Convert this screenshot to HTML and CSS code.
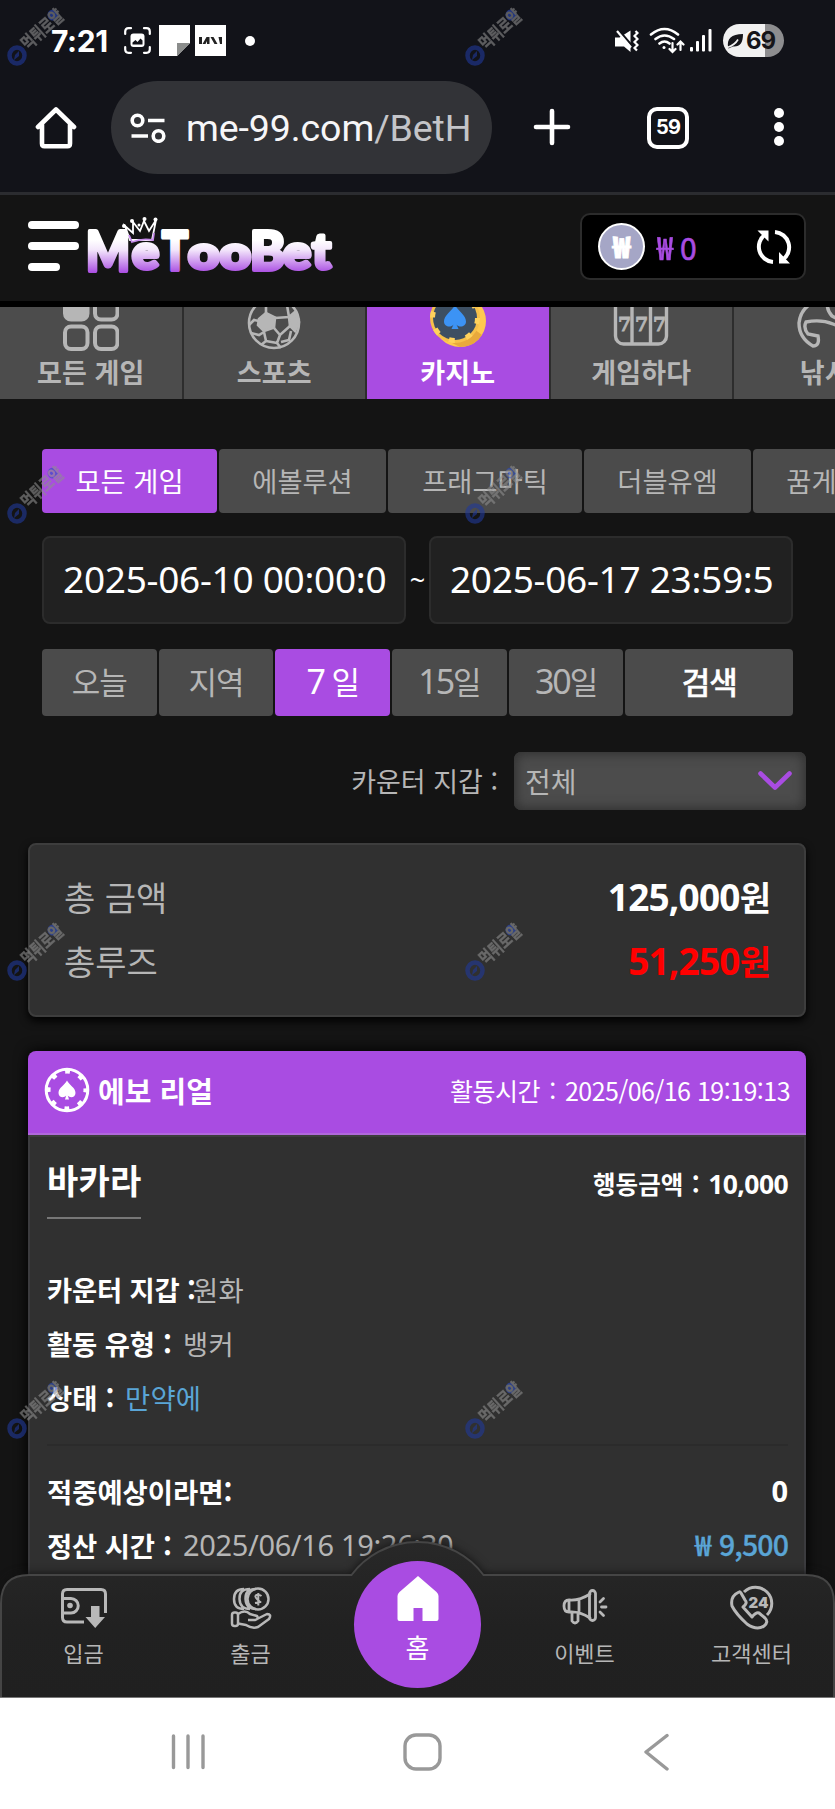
FILE: index.html
```html
<!DOCTYPE html>
<html lang="ko">
<head>
<meta charset="utf-8">
<title>MeTooBet</title>
<link rel="stylesheet" href="styles.css">
</head>
<body>
<svg class="defs" width="0" height="0" aria-hidden="true">
  <defs>
    <symbol id="mark" viewBox="0 0 66 70">
      <ellipse cx="17" cy="55.500" rx="7.500" ry="8" fill="none" stroke="#20399a" stroke-width="4.500"/>
      <path d="M14 60l1-5 4-4v5z" fill="#20399a"/>
      <circle cx="53" cy="15" r="5.500" fill="#2a4bc4"/>
      <text transform="translate(28 51) rotate(-42)" class="mark-text" textLength="50" lengthAdjust="spacingAndGlyphs">먹튀로얄</text>
    </symbol>
  </defs>
</svg>
<div class="phone">
  <header class="status">
    <div class="status-left">
      <span class="clock">7:21</span>
      <svg class="i-shot" width="27" height="27" viewBox="0 0 27 27" fill="none" stroke="#fff" stroke-width="2.2" stroke-linecap="round"><path d="M1.2 7V4.500Q1.200 1.200 4.500 1.200H7M20 1.200H22.500Q25.800 1.200 25.800 4.500V7M25.800 20V22.500Q25.800 25.800 22.500 25.800H20M7 25.800H4.500Q1.200 25.800 1.200 22.500V20"/><rect x="6.500" y="6.500" width="14" height="13.500" rx="3" fill="#fff" stroke="none"/><path d="M8.500 17.500v-2l3-2.500 2 2 3-3.500 2 2v4z" fill="#121319" stroke="none"/></svg>
      <svg class="i-note" width="31" height="31" viewBox="0 0 31 31"><path d="M0 0H31V18L18 31H0z" fill="#fff"/><path d="M18 31V18H31z" fill="#8b8d8c"/></svg>
      <svg class="i-w" width="31" height="31" viewBox="0 0 31 31"><path d="M0 0H31V31H0z" fill="#fff"/><path d="M4 12h3v7H4zM7.500 19l4-7h3v7h-2.500v-3l-1.500 3zM15.500 12h3l4 7h-3zM23.500 12H27v7h-2z" fill="#222"/></svg>
      <i class="dot"></i>
    </div>
    <div class="status-right">
      <svg width="24" height="24" viewBox="0 0 24 24" fill="#fff"><path d="M0 8.500h4.500L15.500 1.500V23L9 17.500H0z"/><path d="M3.500 1L18 18" stroke="#121319" stroke-width="2.500"/><path d="M2 2L16 18.500" stroke="#fff" stroke-width="2.200"/><path d="M20.500 2l2 2-3 3 3 3-3 3 3 3-3 3 2.500 2.500" fill="none" stroke="#fff" stroke-width="2.200"/></svg>
      <svg class="i-wifi" width="36" height="28" viewBox="0 0 36 28" fill="none" stroke="#fff" stroke-width="2.600" stroke-linecap="round"><path d="M2 7.500Q15.500-3.500 29 7.500M6.500 12Q15.500 5 25 12M10.500 16.500Q15.500 12.500 20.500 16.500"/><circle cx="15" cy="20.500" r="1.500" fill="#fff" stroke="none"/><path d="M23.500 16v8.500M20.500 22l3 3 3-3M31.500 23v-8M28.500 17.500l3-3 3 3" stroke-width="2.200"/></svg>
      <svg class="i-sig" width="22" height="23" viewBox="0 0 22 23" fill="#fff"><rect y="18" width="3" height="4.500" rx="1"/><rect x="6" y="12" width="3" height="10.500" rx="1"/><rect x="12" y="6" width="3" height="16.500" rx="1"/><rect x="18.500" y="0" width="3" height="22.500" rx="1"/></svg>
      <span class="battery"><svg width="17" height="16" viewBox="0 0 17 16"><path d="M1 14C0 6 4 1 16 1c0 9-3 13-10 12.500L1.500 15.500z" fill="#151519"/><path d="M0 14.500Q8 12 11 6.500" fill="none" stroke="#f1f1f1" stroke-width="1.600"/></svg>69</span>
    </div>
  </header>

  <div class="browser">
    <svg class="i-home" width="42" height="43" viewBox="0 0 42 43" fill="none" stroke="#fff" stroke-width="4.600" stroke-linejoin="round" stroke-linecap="round"><path d="M3 21L21 3.500 39 21M7 18.500V37.500Q7 40.200 9.500 40.200H32.500Q35 40.200 35 37.500V18.500"/></svg>
    <div class="pill">
      <svg width="36" height="30" viewBox="0 0 36 30" fill="none" stroke="#fff" stroke-width="3.600"><circle cx="7.500" cy="7.500" r="5.300"/><path d="M18 7.500H34.500M1.500 23H18"/><circle cx="28.500" cy="23" r="5.300"/></svg>
      <span class="url">me-99.com<em>/BetH</em></span>
    </div>
    <svg class="i-plus" width="38" height="38" viewBox="0 0 38 38" stroke="#fff" stroke-width="4.600" stroke-linecap="round"><path d="M19 3V35M3 19H35"/></svg>
    <span class="tabs-count">59</span>
    <span class="kebab"><i></i><i></i><i></i></span>
  </div>

  <main class="site">
    <div class="site-head">
      <span class="burger"><i></i><i></i><i></i></span>
      <svg class="logo" width="250" height="62" viewBox="0 0 250 62">
        <defs><linearGradient id="lg" gradientUnits="userSpaceOnUse" x1="0" y1="24" x2="0" y2="57"><stop offset="0" stop-color="#fff"/><stop offset=".3" stop-color="#f3e6fb"/><stop offset="1" stop-color="#a94ce2"/></linearGradient></defs>
        <g fill="url(#lg)" stroke="url(#lg)" stroke-width="4" class="logo-text">
          <text x="3" y="55" font-size="55" textLength="44" lengthAdjust="spacingAndGlyphs">M</text>
          <text x="49" y="53" font-size="47" textLength="27" lengthAdjust="spacingAndGlyphs">e</text>
          <text x="79" y="54" font-size="53" textLength="26" lengthAdjust="spacingAndGlyphs">T</text>
          <text x="105" y="53" font-size="46" textLength="63" lengthAdjust="spacingAndGlyphs">oo</text>
          <text x="167" y="54" font-size="53" textLength="35" lengthAdjust="spacingAndGlyphs">B</text>
          <text x="200" y="53" font-size="47" textLength="28" lengthAdjust="spacingAndGlyphs">e</text>
          <text x="229" y="53" font-size="50" textLength="19" lengthAdjust="spacingAndGlyphs">t</text>
        </g>
        <g stroke="#fff" stroke-width="1.800" fill="#141414"><path d="M42 10L47 24H69L73 4 66 15 61 5 57 15 50 6 50 17z"/><path d="M46 19L49 26Q59 22 70 24L71 17" fill="none" stroke="#c58be9"/><g fill="#fff" stroke="none"><circle cx="41" cy="10" r="2"/><circle cx="49" cy="5" r="2"/><circle cx="61.500" cy="3" r="2"/><circle cx="72.500" cy="3.500" r="2"/><circle cx="56" cy="9" r="1.500"/></g></g>
      </svg>
      <div class="wallet">
        <span class="coin">₩</span>
        <span class="money"><b>₩</b><i>0</i></span>
        <svg width="36" height="36" viewBox="0 0 36 36" fill="none" stroke="#fff" stroke-width="4"><path d="M17 33A15.300 15.300 0 0 1 9 5.500M19 3A15.300 15.300 0 0 1 27 30.500"/><path d="M1.500 1.500H12.500V12.500zM34 34.500H23V23z" fill="#fff" stroke="none"/></svg>
      </div>
    </div>

    <nav class="cats">
      <a><svg width="56" height="56" viewBox="0 0 56 56" fill="none" stroke="#b6b6b6" stroke-width="4"><rect x="2" y="2" width="22.500" height="22.500" rx="6" fill="#b6b6b6"/><rect x="32" y="2" width="22.500" height="22.500" rx="6"/><rect x="2" y="31.500" width="22.500" height="22.500" rx="6"/><rect x="32" y="31.500" width="22.500" height="22.500" rx="6"/></svg><span>모든 게임</span></a>
      <a><svg class="up" width="56" height="56" viewBox="0 0 56 56" fill="none" stroke="#b6b6b6" stroke-width="2.600"><circle cx="28" cy="28" r="25"/><path d="M13 24l7-6 9 4.500-1 10-10 3.500-6-6z" fill="#b6b6b6"/><path d="M43 22l6-5 4 10-4 9-5-5z" fill="#b6b6b6"/><path d="M29 23l14-1M28 33l6 7 10-9M18 37l2 9-5 4M34 40l-3 8 4 5M20 46l11 2M3 30l5-5 5 1M45 36l-2 9-8 2M20 18V8M43 22l-2-12M5 38l8 2 5-3"/></svg><span>스포츠</span></a>
      <a class="on"><svg width="60" height="60" viewBox="0 0 60 60"><circle cx="32" cy="30" r="26" fill="#ffc94f"/><path d="M32 56A26 26 0 0 0 54 44L46 38 24 52z" fill="#e9a93c"/><circle cx="27" cy="27" r="25" fill="#f6c04a"/><circle cx="27" cy="27" r="22" fill="#3d4f62"/><circle cx="27" cy="27" r="22.500" fill="none" stroke="#ffd25c" stroke-width="5" stroke-dasharray="6 11.670" /><path d="M27 14C24 20 16 24 16 30.500 16 36 23 37 25.500 33.500L23.500 38H30.500L28.500 33.500C31 37 38 36 38 30.500 38 24 30 20 27 14z" fill="#3c93f5"/></svg><span>카지노</span></a>
      <a><svg class="up2" width="56" height="56" viewBox="0 0 56 56" fill="none" stroke="#b6b6b6" stroke-width="3.400"><rect x="2.500" y="5" width="51" height="46" rx="8"/><path d="M19 5V51M37.500 5V51"/><g class="sevens"><text x="5" y="38">7</text><text x="22" y="38">7</text><text x="40" y="38">7</text></g></svg><span>게임하다</span></a>
      <a><svg width="56" height="56" viewBox="0 0 56 56" fill="none" stroke="#b6b6b6" stroke-width="3.400"><path d="M26 4Q4 9 2 28q0 15 14 23 7 0 5-10l-10-2Q6 33 9 27q15-3 27 2 12 5 18 1M33 2q-6 10 2 19 10 6 22 4"/></svg><span>낚시</span></a>
    </nav>

    <nav class="vendors">
      <a class="on w1">모든 게임</a><a class="w2">에볼루션</a><a class="w3">프래그마틱</a><a class="w2">더블유엠</a><a class="w2">꿈게이밍</a>
    </nav>

    <div class="range">
      <div class="field"><span>2025-06-10 00:00:0</span></div>
      <span class="tilde">~</span>
      <div class="field"><span>2025-06-17 23:59:5</span></div>
    </div>

    <div class="days">
      <a>오늘</a><a>지역</a><a class="on"><b>7</b>&nbsp;일</a><a><b>15</b>일</a><a><b>30</b>일</a><a class="search">검색</a>
    </div>

    <div class="filter">
      <span>카운터 지갑 :</span>
      <div class="select"><span>전체</span><svg width="34" height="20" viewBox="0 0 34 20" fill="none" stroke="#a94ce2" stroke-width="4.600" stroke-linecap="round" stroke-linejoin="round"><path d="M2.500 2.500L17 16.500 31.500 2.500"/></svg></div>
    </div>

    <section class="totals">
      <div class="trow"><span>총 금액</span><strong><b>125,000</b>원</strong></div>
      <div class="trow red"><span>총루즈</span><strong><b>51,250</b>원</strong></div>
    </section>

    <section class="record">
      <div class="rec-head">
        <svg width="46" height="46" viewBox="0 0 46 46"><circle cx="23" cy="23" r="20.800" fill="none" stroke="#fff" stroke-width="3"/><circle cx="23" cy="23" r="18.700" fill="none" stroke="#fff" stroke-width="4.500" stroke-dasharray="5 9.687" stroke-dashoffset="2.500"/><path d="M23 13.500C21 18 14.500 20.500 14.500 26 14.500 30.500 20 31.500 22.200 28.500L21 32.500H25L23.800 28.500C26 31.500 31.500 30.500 31.500 26 31.500 20.500 25 18 23 13.500z" fill="#fff"/></svg>
        <h2>에보 리얼</h2>
        <time>활동시간<i>:</i>2025/06/16 19:19:13</time>
      </div>
      <div class="rec-body">
        <div class="game"><h3>바카라</h3><strong>행동금액<i>:</i><b>10,000</b></strong></div>
        <p><b class="k1">카운터 지갑 :</b><span>원화</span></p>
        <p><b class="k2">활동 유형<i>:</i></b><span>뱅커</span></p>
        <p><b class="k3">상태<i>:</i></b><span class="blue">만약에</span></p>
        <hr>
        <p><b>적중예상이라면:</b><strong class="end zero">0</strong></p>
        <p><b class="k2">정산 시간<i>:</i></b><span class="num">2025/06/16 19:26:30</span><span class="end blue won"><i>₩</i>9,500</span></p>
      </div>
    </section>

    <nav class="dock">
      <svg class="dock-bg" width="835" height="157" viewBox="0 0 835 157"><defs><linearGradient id="dg" x1="0" y1="0" x2="0" y2="1"><stop offset="0" stop-color="#282828"/><stop offset=".55" stop-color="#212121"/><stop offset="1" stop-color="#202020"/></linearGradient></defs><path d="M1 158V63Q1 35 29 35H351.500A82.500 82.500 0 0 1 483.500 35H806Q834 35 834 63V158" fill="url(#dg)" stroke="#454545" stroke-width="2"/></svg>
      <div class="dock-items">
        <a><svg width="48" height="44" viewBox="0 0 48 44" fill="none" stroke="#b8b8b8" stroke-width="3"><path d="M24 36H7Q2.500 36 2.500 31.500V8Q2.500 3.500 7 3.500H41Q45.500 3.500 45.500 8V27M3 12.500H11A7 7 0 0 1 11 27H3"/><circle cx="10" cy="19.500" r="2.800" fill="#b8b8b8" stroke="none"/><path d="M31 20H39.500V31H45L35.200 42 25.500 31H31z" fill="#b8b8b8" stroke="none"/></svg><span>입금</span></a>
        <a><svg width="42" height="44" viewBox="0 0 42 44" fill="none" stroke="#b8b8b8" stroke-width="2.500" stroke-linejoin="round"><circle cx="28" cy="13" r="10.500"/><path d="M20 3Q9 3 9.500 13T20 23M14 3Q4 3 4 13T14 23M26 3Q15 3 15.500 13T26 23"/><path d="M31.500 10Q29 8 26.500 9T27 13 30.500 16 25 17M28.300 7V19.500" stroke-width="2"/><rect x="2" y="26.500" width="6" height="13.500" rx="2.500"/><path d="M8 28Q15 23 20 28L27 30Q29 33 25 34H18M27 33L37 28Q42 28 39 33L28 41Q22 43 16 39L8 37.500"/></svg><span>출금</span></a>
        <a></a>
        <a><svg class="horn" width="46" height="44" viewBox="0 0 46 44" fill="none" stroke="#b8b8b8" stroke-width="2.800" stroke-linejoin="round" stroke-linecap="round"><path d="M7 14Q17 15 28 8M7 26Q17 25 28 32M7 14Q2 14 2 20T7 26zM17 14V25.500M10 27V35Q13 39 16 35V27"/><rect x="27.500" y="4.500" width="6" height="30" rx="3"/><path d="M38 16l3.500-3.500M39.500 21H44M38 26l3.500 3.500"/></svg><span>이벤트</span></a>
        <a><svg class="tel" width="46" height="46" viewBox="0 0 46 46" fill="none" stroke="#b8b8b8" stroke-width="3" stroke-linejoin="round"><path d="M15 8A16 16 0 1 1 38 31"/><path d="M10 8Q1 12 3 22 7 30 18 40 28 47 35 42 40 38 36 34L30 29Q27 28 23 33L14 23Q19 19 16 16L12 9Q11 7.500 10 8z"/><text x="19.500" y="23.500" class="t24">24</text></svg><span>고객센터</span></a>
      </div>
      <div class="home"><svg width="44" height="45" viewBox="0 0 44 45" fill="#fff"><path d="M22 0L40.500 16Q42.500 18 42.500 20V43Q42.500 45 40.500 45H26.500V32H17.500V45H3.500Q1.500 45 1.500 43V20Q1.500 18 3.500 16z"/></svg><span>홈</span></div>
    </nav>
  </main>

  <footer class="sys">
    <svg width="500" height="38" viewBox="0 0 500 38" fill="none" stroke="#999" stroke-width="3.400" stroke-linecap="round" stroke-linejoin="round"><path d="M3.500 3V34.500M18 3V34.500M33 3V34.500"/><rect x="235" y="2" width="35" height="34" rx="11"/><path d="M497 2.500L476 19 497 36"/></svg>
  </footer>

  <div class="marks">
    <svg><use href="#mark"/></svg><svg><use href="#mark"/></svg>
    <svg><use href="#mark"/></svg><svg><use href="#mark"/></svg>
    <svg><use href="#mark"/></svg><svg><use href="#mark"/></svg>
    <svg><use href="#mark"/></svg><svg><use href="#mark"/></svg>
  </div>
</div>
</body>
</html>
```
FILE: styles.css
```css
* { box-sizing: border-box; margin: 0; padding: 0; }
body { background: #141414; font-family: "Noto Sans CJK KR", "Noto Sans", sans-serif; color: #b6b6b6; }
.defs { position: absolute; }
.phone { position: relative; width: 835px; height: 1809px; overflow: hidden; display: flex; flex-direction: column; }
svg { display: block; flex: none; }
i { font-style: normal; }
a, span, strong, b, time, h2, h3 { white-space: nowrap; }

.status { height: 80px; background: #121319; display: flex; justify-content: space-between; align-items: center; padding: 1px 51px 0 51px; flex: none; }
.status-left, .status-right { display: flex; align-items: center; }
.clock { font: 700 30px/32px Inter, sans-serif; color: #fff; width: 59px; letter-spacing: -.4px; }
.i-shot { margin-left: 14px; }
.i-note { margin-left: 8px; }
.i-w { margin-left: 5px; }
.dot { width: 10px; height: 10px; border-radius: 50%; background: #fff; margin-left: 19px; }
.i-wifi { margin-left: 10px; }
.i-sig { margin-left: 5px; }
.battery { margin-left: 11px; width: 61px; height: 33px; border-radius: 17px; background: linear-gradient(90deg, #f1f1f1 69%, #8d8d8f 69%); color: #151519; font: 700 24px/33px Inter, sans-serif; letter-spacing: -1px; display: flex; align-items: center; padding-left: 4px; gap: 2px; }

.browser { height: 112px; background: #121319; display: flex; align-items: flex-start; padding: 1px 0 0 35px; color: #fff; flex: none; }
.i-home { margin-top: 25px; }
.pill { margin-left: 34px; width: 381px; height: 93px; border-radius: 47px; background: #323337; display: flex; align-items: center; padding-left: 19px; overflow: hidden; }
.url { margin-left: 20px; font: 400 37.500px/44px Roboto, sans-serif; color: #f6f6f8; letter-spacing: -.1px; }
.url em { font-style: normal; color: #c4c5c9; }
.i-plus { margin: 27px 0 0 41px; }
.tabs-count { margin: 26px 0 0 76px; width: 42px; height: 42px; border: 4.500px solid #fff; border-radius: 10px; font: 700 20px/33px Inter, sans-serif; text-align: center; letter-spacing: -1px; }
.kebab { margin: 27px 0 0 85px; display: flex; flex-direction: column; gap: 4px; }
.kebab i { width: 10px; height: 10px; border-radius: 50%; background: #fff; }

.site { position: relative; height: 1505px; overflow: hidden; background: #141414; border-top: 3px solid #2b2c30; display: flex; flex-direction: column; flex: none; }
.site-head { height: 112px; border-bottom: 6px solid #000; display: flex; align-items: flex-start; padding-left: 28px; flex: none; }
.burger { width: 52px; display: flex; flex-direction: column; gap: 13px; padding-top: 26px; }
.burger i { width: 51px; height: 8px; border-radius: 4px; background: #fff; }
.burger i:last-child { width: 32px; }
.logo { margin: 21px 0 0 3px; overflow: visible; }
.logo-text { font-family: Lato, sans-serif; font-weight: 900; stroke-linejoin: round; }
.wallet { margin: 18px 0 0 247px; width: 226px; height: 67px; border: 2px solid #2c2c2c; border-radius: 10px; background: #000; display: flex; align-items: center; padding-left: 16px; }
.coin { width: 47px; height: 47px; border-radius: 50%; background: #a5a6c6; border: 2px solid #fff; color: #fff; font: 900 29px/41px "Noto Sans CJK KR", sans-serif; text-align: center; -webkit-text-stroke: .8px #fff; }
.money { margin-left: 12px; width: 99px; color: #a94ce2; font-size: 28px; line-height: 38px; display: flex; gap: 6px; -webkit-text-stroke: .6px #a94ce2; }
.money b { width: 17px; font-weight: 500; font-size: 31px; line-height: 37px; }
.money b { transform: scaleX(.9); transform-origin: 0 50%; }
.money i { font-size: 30px; }

.cats { display: flex; gap: 2px; height: 92px; overflow: hidden; background: #2d2d2d; flex: none; width: 920px; }
.cats a { width: 181.500px; background: #4c4c4c; display: flex; flex-direction: column; align-items: center; justify-content: flex-end; padding-bottom: 10px; font-weight: 700; font-size: 27px; letter-spacing: .1px; line-height: 34px; flex: none; }
.cats svg { margin-bottom: 4px; }
.cats svg.up { margin-bottom: 4px; }
.cats svg.up2 { margin-bottom: 6px; }
.cats .on, .vendors .on, .days .on { background: #a94ce2; color: #fff; }
.sevens { fill: #b6b6b6; stroke: #b6b6b6; stroke-width: .8px; font: 700 19px "DejaVu Serif", serif; }

.vendors { display: flex; gap: 2px; margin: 50px 0 0 42px; width: 890px; flex: none; }
.vendors a { height: 64px; border-radius: 4px; background: #4b4b4b; font-size: 27.300px; line-height: 63px; text-align: center; flex: none; }
.w1 { width: 175px; } .w2 { width: 167px; } .w3 { width: 194px; }

.range { margin: 23px 42px 0; display: flex; align-items: center; justify-content: space-between; }
.field { width: 364px; height: 88px; border: 2px solid #2c2c2c; border-radius: 8px; background: #212121; padding: 0 10px 0 19px; font: 400 37px/82px "Noto Sans", sans-serif; letter-spacing: -.28px; color: #fff; }
.tilde { color: #fff; font: 400 27px/30px "Noto Sans", sans-serif; }

.days { margin: 25px 42px 0; display: flex; gap: 2px; }
.days a { width: 114.700px; height: 67px; border-radius: 4px; background: #4b4b4b; font-size: 31px; line-height: 63px; text-align: center; letter-spacing: -1px; flex: none; }
.days a b { font: 400 34px/63px "Noto Sans", sans-serif; letter-spacing: -2px; }
.days a.search { width: auto; flex: 1; color: #fff; font-weight: 500; -webkit-text-stroke: .4px #fff; }

.filter { margin: 36px 29px 0 0; display: flex; justify-content: flex-end; align-items: center; font-size: 27px; line-height: 52px; }
.select { margin-left: 16px; width: 292px; height: 58px; border-radius: 7px; background: #4c4c4c; box-shadow: inset 0 0 12px 2px #303030; display: flex; align-items: center; justify-content: space-between; padding: 0 14px 0 11px; font-size: 28px; }

.totals { margin: 33px 29px 0 28px; height: 174px; flex: none; border: 2px solid #3d3d3d; border-radius: 8px; background: #303030; box-shadow: 0 4px 8px #000; padding: 20px 33px 0 34px; }
.trow { display: flex; justify-content: space-between; height: 64px; line-height: 64px; font-size: 34px; }
.trow strong { color: #fff; font-size: 34px; }
.trow strong b { font: 700 37px/64px "Noto Sans", sans-serif; letter-spacing: -.8px; }
.trow.red strong { color: #f00; }

.record { margin: 34px 29px 0 28px; height: 600px; flex: none; border-radius: 8px 8px 0 0; overflow: hidden; box-shadow: 0 0 14px #000; }
.rec-head { height: 84px; background: #a94ce2; border-bottom: 2px solid #b168dc; display: flex; align-items: center; color: #fff; padding: 0 16px 4px; }
.rec-head h2 { margin-left: 8px; font-size: 29px; line-height: 40px; font-weight: 700; }
.rec-head time { margin-left: auto; font-size: 25px; letter-spacing: -.52px; font-weight: 400; }
.rec-head time i { display: inline-block; width: 25px; text-align: center; }
.rec-body { height: 516px; background: #303030; border: 2px solid #3b3b3e; border-top-color: #3d3d3d; padding: 20px 16px 0 17px; }
.game { display: flex; justify-content: space-between; align-items: flex-start; color: #fff; height: 105px; }
.game h3 { font-size: 34px; line-height: 45px; height: 62px; border-bottom: 2px solid #777; letter-spacing: .2px; }
.game strong { font-size: 24.500px; line-height: 53px; }
.game strong i { display: inline-block; width: 25px; text-align: center; }
.game strong b { font: 700 26.500px/53px "Noto Sans", sans-serif; letter-spacing: -.6px; }
.rec-body p { display: flex; height: 54px; line-height: 54px; font-size: 27.400px; }
.rec-body p > b { color: #fff; flex: none; }
.rec-body p > b i { display: inline-block; width: 25px; text-align: center; }
.k1 { width: 146px; letter-spacing: -.2px; } .k2 { width: 136px; letter-spacing: -.1px; } .k3 { width: 78px; }
.rec-body p > span { position: static; letter-spacing: .2px; }
.rec-body hr { border: 0; border-top: 2px solid #2b2b2b; margin: 20px 0 18px; }
.end { margin-left: auto; }
.zero { color: #fff; font: 700 29px/54px "Noto Sans", sans-serif; }
.rec-body p > .num { font: 400 29px/54px "Noto Sans", sans-serif; letter-spacing: -.35px; }
.blue { color: #5aa5d6; }
.rec-body p > .won { font-weight: 500; font-size: 28.500px; line-height: 52px; letter-spacing: -.9px; -webkit-text-stroke: .3px #5aa5d6; }
.won i { margin-right: 4px; display: inline-block; width: 20px; }

.dock { position: absolute; left: 0; bottom: 0; width: 835px; height: 157px; }
.dock-bg { position: absolute; left: 0; top: 0; filter: drop-shadow(0 0 5px #111); }
.dock-items { position: relative; display: flex; padding-top: 44px; }
.dock-items a { flex: 1; display: flex; flex-direction: column; align-items: center; font-size: 22px; line-height: 30px; }
.dock-items svg { margin: 2px 0 7px; height: 44px; }
.dock-items svg.tel { margin: 0 0 7px; height: 46px; }
.t24 { fill: #b8b8b8; stroke: none; font: 900 15px Inter, sans-serif; }
.home { position: absolute; left: 354px; top: 21px; width: 127px; height: 127px; border-radius: 50%; background: #a94ce2; display: flex; flex-direction: column; align-items: center; padding-top: 15px; color: #fff; font-size: 26px; line-height: 30px; }
.home span { margin-top: 11px; }

.sys { height: 112px; background: #fff; display: flex; padding: 35px 0 0 170px; flex: none; border-top: 1px solid #777; }

.marks { position: absolute; inset: 0; display: grid; grid-template-columns: 458px 377px; grid-template-rows: repeat(4, 457.600px); opacity: .6; pointer-events: none; }
.marks svg { width: 66px; height: 70px; overflow: visible; }
.mark-text { fill: #8f8f8f; stroke: #8f8f8f; stroke-width: .4px; font-size: 18px; font-weight: 700; }
```
